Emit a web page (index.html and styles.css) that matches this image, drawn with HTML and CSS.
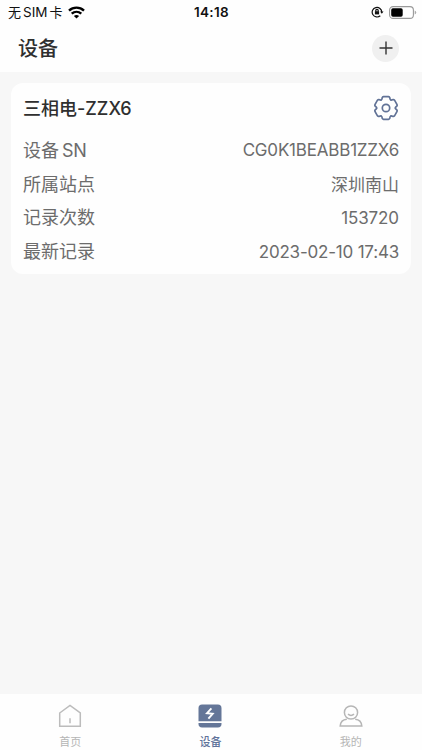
FILE: index.html
```
<!DOCTYPE html>
<html lang="zh-CN">
<head>
<meta charset="utf-8">
<title>设备</title>
<link rel="stylesheet" href="styles.css">
</head>
<body>
<div class="app">
  <div class="status">
    <div class="carrier"><span>无</span><span class="sim">SIM</span><span>卡</span>
      <svg class="wifi" width="17" height="13" viewBox="0 0 17 13" fill="none" stroke="#000" stroke-width="2.400"><path d="M1 4.600C5.200.6 11.800.6 16 4.600M3.700 7.700c2.800-2.500 6.800-2.500 9.600 0"/><path d="M5.900 9.900c1.500-1.300 3.700-1.300 5.200 0L8.500 12.500z" fill="#000" stroke="none"/></svg>
    </div>
    <div class="time">14:18</div>
    <div class="indicators">
      <svg width="13" height="12" viewBox="0 0 13 12" fill="none" stroke="#111" stroke-width="1.200"><path d="M9.300 9.700A4.800 4.800 0 1 1 10.800 6.200"/><path d="M9.100 5.500h3.400L10.800 7.700z" fill="#111" stroke="none"/><rect x="3.900" y="5.200" width="4.200" height="3.200" fill="#111" stroke="none"/><path d="M4.800 5.400V4.500a1.200 1.200 0 0 1 2.400 0v.9"/></svg>
      <svg width="28" height="13" viewBox="0 0 28 13"><rect x=".6" y=".6" width="23.800" height="11.800" rx="3.500" fill="#fff" stroke="#999" stroke-width="1.100"/><rect x="2.200" y="2.200" width="11.500" height="8.600" rx="1.700"/><path d="M25.700 4.400q1.500.6 1.500 2.100t-1.500 2.100z" fill="#aaa"/></svg>
    </div>
  </div>
  <header class="header">
    <h1>设备</h1>
    <button class="add" aria-label="添加"><svg width="14" height="14" viewBox="0 0 14 14" stroke="#333" stroke-width="1.400"><path d="M7 .5v13M.5 7h13"/></svg></button>
  </header>
  <main class="content">
    <section class="card">
      <div class="card-head">
        <h2>三相电<span class="model">-ZZX6</span></h2>
        <svg width="26" height="26" viewBox="-13 -13 26 26" fill="none" stroke="#617296" stroke-width="1.700" stroke-linecap="round">
          <defs><path id="tooth" d="M-4.700-8.140C-3.600-8.780-4-9.700-3.800-10.300Q-3.500-11.200-2.500-11.300H2.500Q3.500-11.200 3.800-10.300C4-9.700 3.600-8.780 4.700-8.140"/></defs>
          <use href="#tooth"/><use href="#tooth" transform="rotate(60)"/><use href="#tooth" transform="rotate(120)"/><use href="#tooth" transform="rotate(180)"/><use href="#tooth" transform="rotate(240)"/><use href="#tooth" transform="rotate(300)"/>
          <circle r="3.700"/>
        </svg>
      </div>
      <div class="row"><span class="label">设备<span class="sn">SN</span></span><span class="value serial">CG0K1BEABB1ZZX6</span></div>
      <div class="row"><span class="label">所属站点</span><span class="value site">深圳南山</span></div>
      <div class="row"><span class="label">记录次数</span><span class="value count">153720</span></div>
      <div class="row"><span class="label">最新记录</span><span class="value date">2023-02-10 17:43</span></div>
    </section>
  </main>
  <nav class="tabs">
    <a class="tab"><svg width="24" height="24" viewBox="0 0 24 24" fill="none" stroke="#bcbcbc" stroke-width="1.500"><path d="M1.700 9 12 1.500 22.300 9v13.300H1.700zM12 14.300v5"/></svg><span>首页</span></a>
    <a class="tab active"><svg width="24" height="24" viewBox="0 0 24 24"><path d="M.5 17.200V4.200Q.5.600 4.100.600h15.800q3.600 0 3.600 3.600v13zM.5 18.900h23v1.200q0 3.400-3.600 3.400H4.100q-3.600 0-3.600-3.400z" fill="#647698"/><path d="M13.400 4.400 9 9.200l5.700.6-4.300 4.900" fill="none" stroke="#fff" stroke-width="1.900"/></svg><span>设备</span></a>
    <a class="tab"><svg width="24" height="24" viewBox="0 0 24 24" fill="none" stroke="#b6b6b6" stroke-width="1.500"><circle cx="12" cy="8.500" r="6.600"/><path d="M9 10.200q3 2.400 6 0M7.800 15.300C4 15.600 1.500 18.300 1.200 22h21.600c-.3-3.700-2.800-6.400-6.600-6.700"/></svg><span>我的</span></a>
  </nav>
</div>
</body>
</html>
```
FILE: styles.css
```
* { box-sizing: border-box; }
body { margin: 0; font-family: Inter, "Noto Sans CJK SC", sans-serif; color: #2f2f2f; }
.app { width: 422px; height: 750px; display: flex; flex-direction: column; background: #f7f7f7; overflow: hidden; }
.status { height: 24px; display: grid; grid-template-columns: 1fr auto 1fr; align-items: center; padding: 0 7px 0 8px; background: #fefefe; color: #111; font-size: 13px; line-height: 24px; }
.carrier { display: flex; align-items: center; }
.sim { margin: 0 2px; font-size: 13.500px; }
.wifi { margin-left: 5px; }
.time { font-weight: 600; font-size: 13.500px; letter-spacing: .3px; }
.indicators { display: flex; align-items: center; justify-content: flex-end; gap: 5px; margin-right: -2px; }
.header { height: 48px; display: flex; align-items: center; justify-content: space-between; padding: 0 23px 0 18px; background: #fefefe; }
h1 { margin: 0; padding-top: 2px; font-size: 20px; line-height: 28px; font-weight: 500; }
.add { width: 27px; height: 27px; padding: 0; border: 0; border-radius: 50%; background: #f0f0f0; display: flex; align-items: center; justify-content: center; }
.content { flex: 1; padding: 11px; }
.card { height: 191px; padding: 9px 12px 0; border-radius: 12px; background: #fefefe; }
.card-head { height: 32px; margin-bottom: 9px; display: flex; align-items: center; justify-content: space-between; }
h2 { margin: 0; padding-top: 1px; font-size: 18px; font-weight: 500; line-height: 32px; }
.row { height: 33.800px; display: flex; align-items: center; justify-content: space-between; color: #6c6c6c; line-height: 30px; }
.label { padding-top: 2px; font-size: 18px; }
.sn { margin-left: 3px; letter-spacing: -.4px; }
.value { padding-top: 1px; font-size: 17px; }
.site { padding-top: 2px; }
.serial { letter-spacing: -.2px; }
.count { letter-spacing: -.1px; }
.date { letter-spacing: -.2px; }
.tabs { height: 56px; padding-right: 1px; display: flex; justify-content: space-around; background: #fefefe; }
.tab { width: 140px; display: flex; flex-direction: column; align-items: center; padding-top: 10px; color: #b5b5b5; font-size: 11px; line-height: 16px; }
.tab span { margin-top: 6px; }
.active { color: #60739a; font-weight: 500; }
```
